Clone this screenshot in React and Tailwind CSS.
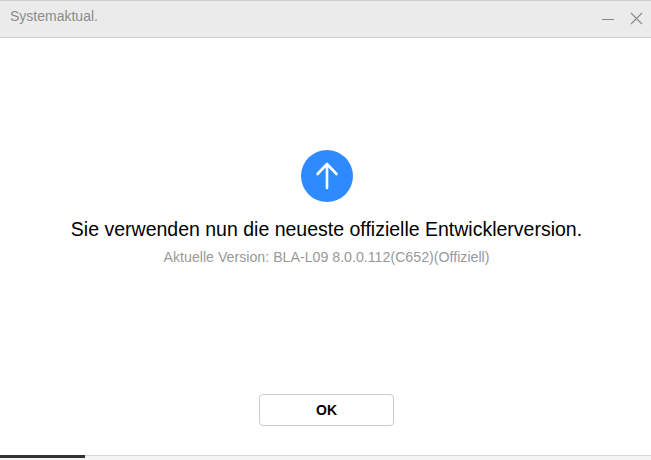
export default function App() {
  return (
    <div className="w-[651px] h-[460px] flex flex-col bg-white overflow-hidden font-['Liberation_Sans',Arial,sans-serif]">
      <div className="h-[38px] shrink-0 flex items-start justify-between bg-[#ebebeb] border-y border-[#cccccc]">
        <span className="ml-[10px] mt-[6px] text-[14px] leading-[18px] text-[#8c8c8c]">Systemaktual.</span>
        <div className="flex items-center gap-[16px] mr-[8px] mt-[11px]">
          <svg width="12" height="12" viewBox="0 0 12 12">
            <path d="M0 6.5H12" stroke="#8a8a8a" strokeWidth="1" />
          </svg>
          <svg width="13" height="13" viewBox="0 0 13 13">
            <path d="M1 1L12 12M12 1L1 12" stroke="#8a8a8a" strokeWidth="1.1" />
          </svg>
        </div>
      </div>

      <div className="flex-1 flex flex-col items-center pt-[112px] pl-[2px]">
        <div className="w-[52px] h-[52px] rounded-full bg-[#2e8bff] flex items-center justify-center">
          <svg width="24" height="28" viewBox="0 0 24 28" fill="none">
            <path d="M12 26V2M2.500 12L12 2L21.500 12" stroke="white" strokeWidth="2.600" strokeLinecap="round" strokeLinejoin="round" />
          </svg>
        </div>
        <h1 className="mt-[14px] text-[19.5px] leading-[26px] text-black">Sie verwenden nun die neueste offizielle Entwicklerversion.</h1>
        <p className="mt-[6px] text-[14.2px] leading-[18px] text-[#999999]">Aktuelle Version: BLA-L09 8.0.0.112(C652)(Offiziell)</p>
        <button className="mt-[128px] w-[135px] h-[32px] rounded-[4px] border border-[#cccccc] bg-white text-[14px] font-bold text-black">OK</button>
      </div>

      <div className="h-[5px] shrink-0 relative bg-[#f4f4f4] border-t border-[#d9d9d9]">
        <div className="absolute left-0 top-[-1px] w-[85px] h-[3px] bg-[#333333]" />
      </div>
    </div>
  );
}
